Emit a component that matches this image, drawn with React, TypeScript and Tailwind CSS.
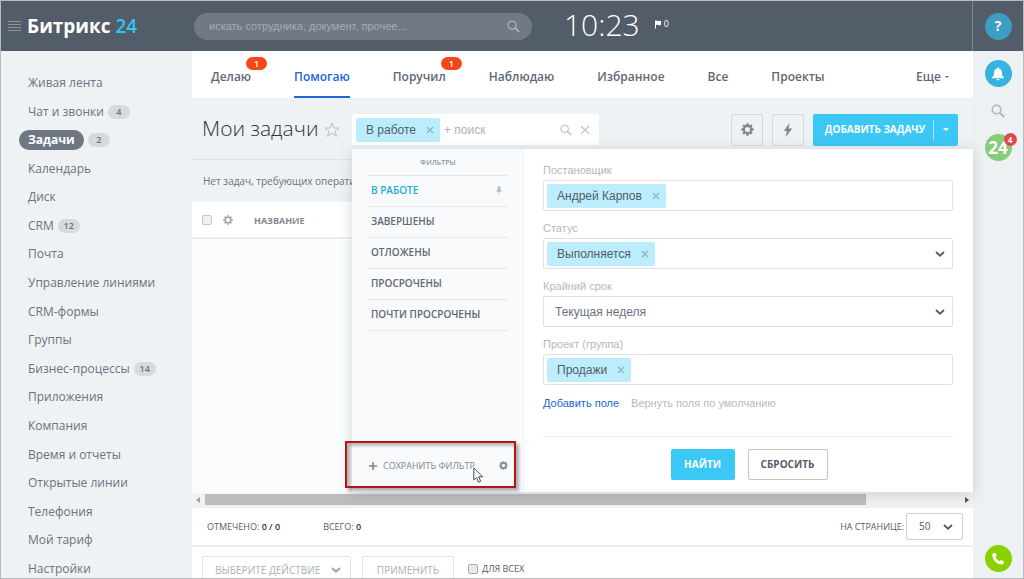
import React from 'react';

type MenuItem = { label: string; count?: number; active?: boolean };

const menu: MenuItem[] = [
  { label: 'Живая лента' },
  { label: 'Чат и звонки', count: 4 },
  { label: 'Задачи', count: 2, active: true },
  { label: 'Календарь' },
  { label: 'Диск' },
  { label: 'CRM', count: 12 },
  { label: 'Почта' },
  { label: 'Управление линиями' },
  { label: 'CRM-формы' },
  { label: 'Группы' },
  { label: 'Бизнес-процессы', count: 14 },
  { label: 'Приложения' },
  { label: 'Компания' },
  { label: 'Время и отчеты' },
  { label: 'Открытые линии' },
  { label: 'Телефония' },
  { label: 'Мой тариф' },
  { label: 'Настройки' },
];

type Tab = { label: string; badge?: number; active?: boolean };

const tabs: Tab[] = [
  { label: 'Делаю', badge: 1 },
  { label: 'Помогаю', active: true },
  { label: 'Поручил', badge: 1 },
  { label: 'Наблюдаю' },
  { label: 'Избранное' },
  { label: 'Все' },
  { label: 'Проекты' },
];

const filters = ['В РАБОТЕ', 'ЗАВЕРШЕНЫ', 'ОТЛОЖЕНЫ', 'ПРОСРОЧЕНЫ', 'ПОЧТИ ПРОСРОЧЕНЫ'];

type IconProps = { className?: string };

function Gear({ className }: IconProps) {
  return (
    <svg viewBox="0 0 16 16" className={className} aria-hidden="true">
      <circle cx="8" cy="8" r="4.4" fill="none" stroke="currentColor" strokeWidth="2.6" />
      <g stroke="currentColor" strokeWidth="3">
        <path d="M8 .4v2.600M8 13v2.600M.4 8H3M13 8h2.600M2.600 2.600l1.900 1.900M11.500 11.500l1.900 1.900M2.600 13.400l1.900-1.900M11.500 4.500l1.900-1.900" />
      </g>
    </svg>
  );
}

function Magnifier({ className }: IconProps) {
  return (
    <svg viewBox="0 0 14 14" className={className} fill="none" stroke="currentColor" aria-hidden="true">
      <circle cx="5.5" cy="5.5" r="4.3" strokeWidth="1.5" />
      <path d="M8.6 8.6l4.600 4.400" strokeWidth="1.900" />
    </svg>
  );
}

function Cross({ className }: IconProps) {
  return (
    <svg viewBox="0 0 10 10" className={className} fill="none" stroke="currentColor" aria-hidden="true">
      <path d="M1 1l8 8M9 1l-8 8" strokeWidth="1.4" />
    </svg>
  );
}

function Chevron({ className }: IconProps) {
  return (
    <svg viewBox="0 0 10 6" className={className} fill="none" stroke="currentColor" aria-hidden="true">
      <path d="M1 1l4 3.6L9 1" strokeWidth="1.9" />
    </svg>
  );
}

function Chip({ children }: { children: string }) {
  return (
    <span className="flex h-6 shrink-0 items-center gap-2.5 rounded-xs bg-[#bcedfc] pr-1.5 pl-2.5 text-xs text-[#535c69]">
      {children}
      <button type="button" aria-label={`Убрать: ${children}`} className="text-[#91b5c0]">
        <svg viewBox="0 0 8 8" className="size-2" fill="none" stroke="currentColor" aria-hidden="true">
          <path d="M1 1l6 6M7 1L1 7" strokeWidth="1.4" />
        </svg>
      </button>
    </span>
  );
}

function Field({ id, label, chip, dropdown }: { id: string; label: string; chip: string; dropdown?: boolean }) {
  return (
    <div>
      <label htmlFor={id} className="block h-5 text-[11px] leading-5 text-[#b4b8bd]">
        {label}
      </label>
      <div className="flex h-[31px] items-center rounded-xs border border-[#dfe1e4] bg-white pr-[7px] pl-[3px]">
        <Chip>{chip}</Chip>
        <input id={id} className="min-w-0 flex-1 bg-transparent px-2 text-xs outline-none" />
        {dropdown && (
          <button type="button" aria-label="Открыть список" className="text-[#535c69]">
            <Chevron className="h-1.5 w-2.5" />
          </button>
        )}
      </div>
    </div>
  );
}

function Header() {
  return (
    <header className="flex h-[50px] shrink-0 bg-[#535c69]">
      <div className="flex min-w-0 flex-1 items-center border-r border-[#7d858f]">
        <div className="flex w-[193px] shrink-0 items-center gap-1.5 pl-[7px]">
          <button type="button" aria-label="Меню" className="flex w-[13px] flex-col gap-0.5">
            <span className="h-px bg-[#8d949d]" />
            <span className="h-px bg-[#8d949d]" />
            <span className="h-px bg-[#8d949d]" />
            <span className="h-px bg-[#8d949d]" />
          </button>
          <a href="#home" className="text-[19px] leading-7 font-bold text-white">
            Битрикс <span className="font-semibold text-[#2fc7f7]">24</span>
          </a>
        </div>
        <form className="flex h-[27px] w-[338px] shrink-0 items-center rounded-full bg-[#717a84] pr-3 pl-[15px]">
          <input
            aria-label="Поиск по порталу"
            placeholder="искать сотрудника, документ, прочее..."
            className="min-w-0 flex-1 bg-transparent font-['Liberation_Sans',sans-serif] text-[11px] text-white outline-none placeholder:text-[#a5abb2]"
          />
          <button type="button" aria-label="Найти" className="text-[#a9afb6]">
            <Magnifier className="size-[13px]" />
          </button>
        </form>
        <time className="ml-8 pb-0.5 text-[30px] leading-10 font-light text-white">10:23</time>
        <span className="mb-1 ml-3.5 flex items-center gap-0.5 text-[9px] leading-3 text-white">
          <svg viewBox="0 0 8 9" className="h-[9px] w-2" fill="currentColor" aria-hidden="true">
            <path d="M1 0.5h1v8H1zM2 0.8c2-.6 2.500.6 5 0v4.200c-2.300.6-3-.6-5 0z" />
          </svg>
          0
        </span>
      </div>
      <div className="flex w-[50px] items-center justify-center">
        <button
          type="button"
          aria-label="Помощь"
          className="flex size-[27px] items-center justify-center rounded-full bg-[#3c9ec2] text-sm font-bold text-white"
        >
          ?
        </button>
      </div>
    </header>
  );
}

function Sidebar() {
  return (
    <nav aria-label="Главное меню" className="-mb-px flex w-[191px] shrink-0 flex-col justify-between gap-1 pt-[22px]">
      {menu.map((item) => (
        <a
          key={item.label}
          href="#menu"
          className="flex h-5 shrink-0 items-center gap-1 pl-[18px] text-xs leading-5 text-[#6a737f]"
        >
          <span
            className={
              item.active
                ? 'rounded-full bg-[#6d7681] px-[9px] font-bold text-white'
                : 'pl-[9px]'
            }
          >
            {item.label}
          </span>
          {item.count !== undefined && (
            <span className="flex h-3.5 w-[22px] items-center justify-center rounded-full bg-[#d5dadf] text-[9px] font-semibold text-[#6a737f]">
              {item.count}
            </span>
          )}
        </a>
      ))}
    </nav>
  );
}

function Tabs() {
  return (
    <nav aria-label="Разделы задач" className="flex h-[47px] shrink-0 items-stretch gap-[43px] bg-white pr-6 pl-[19px] text-xs font-semibold text-[#5f6873]">
      {tabs.map((tab) => (
        <a
          key={tab.label}
          href="#tab"
          className={
            tab.active
              ? 'relative flex items-center border-b-2 border-[#2067d6] pt-1.5 text-[#2067d6]'
              : 'relative flex items-center border-b-2 border-transparent pt-1.5'
          }
        >
          {tab.label}
          {tab.badge !== undefined && (
            <span className="absolute top-1.5 -right-4 flex h-[13px] w-[21px] items-center justify-center rounded-full bg-[#f54819] text-[9px] text-white">
              {tab.badge}
            </span>
          )}
        </a>
      ))}
      <button type="button" className="ml-auto flex items-center gap-1 pt-1">
        Еще
        <span className="border-x-2 border-t-2 border-x-transparent border-t-current" />
      </button>
    </nav>
  );
}

function FilterPanel() {
  return (
    <div className="absolute top-[51px] right-0 left-40 z-10 flex bg-white shadow-[0_2px_12px_rgba(83,92,105,0.25)]">
      <section className="flex w-[172px] shrink-0 flex-col border-r border-[#eef1f3] bg-[#f8fafb] pr-[15px] pl-4">
        <h2 className="h-[26px] pt-px text-center text-[7px] leading-[26px] font-semibold text-[#8d949d]">ФИЛЬТРЫ</h2>
        <ul className="border-t border-[#e4e8eb]">
          {filters.map((name, i) => (
            <li key={name} className="flex h-[31px] items-center justify-between border-b border-[#e4e8eb] pr-1.5 pb-0.5 pl-[3px]">
              <button
                type="button"
                className={i === 0 ? 'text-[10px] font-semibold text-[#1fa9dc]' : 'text-[10px] font-semibold text-[#5f6873]'}
              >
                {name}
              </button>
              {i === 0 && (
                <svg viewBox="0 0 8 11" className="h-[9px] w-1.5 text-[#b4bac0]" fill="currentColor" aria-label="Закреплён">
                  <path d="M1.500 0h5v1.200H6v3.600L7.500 6v1.200h-3V11h-1V7.200h-3V6L2 4.800V1.200h-.5z" />
                </svg>
              )}
            </li>
          ))}
        </ul>
        <div className="relative mt-auto mb-1 flex h-[47px] items-center gap-1.5 pt-0.5 text-[#7f8790]">
          <button type="button" className="flex items-center gap-1.5 pl-px text-[9px]">
            <svg viewBox="0 0 8 8" className="size-2" stroke="currentColor" aria-hidden="true">
              <path d="M4 0v8M0 4h8" strokeWidth="1.600" />
            </svg>
            СОХРАНИТЬ ФИЛЬТР
          </button>
          <button type="button" aria-label="Настроить фильтры" className="ml-auto">
            <Gear className="size-[9px]" />
          </button>
          <div className="pointer-events-none absolute inset-y-0 -right-2 -left-[23px] border-2 border-[#bd1010] shadow-[3px_3px_3px_rgba(0,0,0,0.3),inset_3px_3px_3px_rgba(0,0,0,0.25)]" />
          <svg viewBox="0 0 11 17" className="pointer-events-none absolute top-[26px] right-6 h-[17px] w-[11px]" aria-hidden="true">
            <path d="M.8 1v12l2.800-2.500 1.900 4.700 2.200-.9-2-4.500h4z" fill="#fff" stroke="#444b58" />
          </svg>
        </div>
      </section>
      <form className="min-w-0 flex-1 pr-5 pb-3 pl-[19px] font-['Liberation_Sans',sans-serif]">
        <div className="flex flex-col gap-[7px] pt-[11px]">
          <Field id="director" label="Постановщик" chip="Андрей Карпов" />
          <Field id="status" label="Статус" chip="Выполняется" dropdown />
          <div>
            <label htmlFor="deadline" className="block h-5 text-[11px] leading-5 text-[#b4b8bd]">
              Крайний срок
            </label>
            <div className="relative">
              <select
                id="deadline"
                className="block h-[31px] w-full appearance-none rounded-xs border border-[#dfe1e4] bg-white px-[11px] text-xs text-[#6a737f]"
              >
                <option>Текущая неделя</option>
              </select>
              <Chevron className="pointer-events-none absolute top-[13px] right-2 h-1.5 w-2.5 text-[#535c69]" />
            </div>
          </div>
          <Field id="project" label="Проект (группа)" chip="Продажи" />
        </div>
        <div className="flex h-[52px] gap-3 border-b border-[#f0f2f4] pt-2.5 text-[11px] leading-4">
          <a href="#add-field" className="text-[#2067d6]">Добавить поле</a>
          <a href="#reset-fields" className="text-[#b4b8bd]">Вернуть поля по умолчанию</a>
        </div>
        <div className="flex justify-center gap-[13px] pt-3 pl-0.5 font-['Open_Sans',sans-serif] text-[10px] font-bold">
          <button type="button" className="h-[31px] w-16 rounded-xs bg-[#3bc8f5] text-white">НАЙТИ</button>
          <button type="button" className="h-[31px] w-20 rounded-xs border border-[#c0c3c7] bg-white text-[#535c69]">СБРОСИТЬ</button>
        </div>
      </form>
    </div>
  );
}

function TitleBar() {
  return (
    <div className="relative flex h-[62px] shrink-0 items-center border-b border-[#dfe4e7] pt-0.5 pr-[15px]">
      <div className="flex w-40 shrink-0 items-center gap-1.5 pl-2.5">
        <h1 className="pb-1 text-[21px] leading-8 font-light whitespace-nowrap text-[#333]">Мои задачи</h1>
        <button type="button" aria-label="В избранное" className="text-[#b9c0c6]">
          <svg viewBox="0 0 16 16" className="size-4" fill="none" stroke="currentColor" aria-hidden="true">
            <path d="M8 1l1.900 5h5.200l-4.200 3.200 1.600 5.200L8 11.200l-4.500 3.200 1.600-5.200L.9 6h5.200z" />
          </svg>
        </button>
      </div>
      <div className="flex h-[31px] w-[247px] items-center rounded-xs bg-white pr-[9px] pl-1 font-['Liberation_Sans',sans-serif]">
        <Chip>В работе</Chip>
        <input
          aria-label="Поиск и фильтр"
          placeholder="+ поиск"
          className="min-w-0 flex-1 px-1 text-xs text-[#535c69] outline-none placeholder:text-[#abb1b8]"
        />
        <button type="button" aria-label="Искать" className="text-[#c3c8cd]">
          <Magnifier className="size-3" />
        </button>
        <button type="button" aria-label="Очистить" className="ml-2 text-[#c3c8cd]">
          <Cross className="size-2.5" />
        </button>
      </div>
      <div className="ml-auto flex items-center gap-[9px]">
        <button type="button" aria-label="Настройки" className="flex size-8 items-center justify-center rounded-xs border border-[#d3d8dc] text-[#7f8790]">
          <Gear className="size-[13px]" />
        </button>
        <button type="button" aria-label="Автоматизация" className="flex size-8 items-center justify-center rounded-xs border border-[#d3d8dc] text-[#7f8790]">
          <svg viewBox="0 0 10 14" className="h-3.5 w-2.5" fill="currentColor" aria-hidden="true">
            <path d="M6.500 0L.8 8h3L2.800 14 9.200 5.600H5.700z" />
          </svg>
        </button>
        <div className="flex h-8 items-center rounded-xs bg-[#3bc8f5] text-[10px] font-bold text-white">
          <button type="button" className="h-5 w-[121px] border-r border-[#a5e5fb] pl-1">ДОБАВИТЬ ЗАДАЧУ</button>
          <button type="button" aria-label="Ещё варианты" className="flex h-8 w-6 items-center justify-center">
            <span className="border-x-[3px] border-t-[3px] border-x-transparent border-t-white" />
          </button>
        </div>
      </div>
      <FilterPanel />
    </div>
  );
}

function TaskGrid() {
  return (
    <>
      <p className="h-[42px] shrink-0 pl-[11px] text-[10px] leading-[42px] text-[#6a737f]">
        Нет задач, требующих оперативной реакции
      </p>
      <div className="min-h-40 flex-1 bg-[#fafcfd]">
        <table className="w-full border-b-2 border-[#eaeff2] bg-white">
          <thead>
            <tr className="h-9 text-left">
              <th className="w-[25px] pl-2.5">
                <input type="checkbox" aria-label="Выбрать все" className="block size-2.5 appearance-none rounded-xs border border-[#c5c9cd] bg-[#f1f1f1]" />
              </th>
              <th className="w-[37px] pl-1.5">
                <button type="button" aria-label="Настроить колонки" className="block text-[#a3aab2]">
                  <Gear className="size-2.5" />
                </button>
              </th>
              <th className="pt-0.5 text-[9px] font-bold text-[#7f8790]">НАЗВАНИЕ</th>
            </tr>
          </thead>
        </table>
      </div>
      <div className="flex h-[15px] shrink-0 items-center bg-[#f0f1f2] pb-0.5">
        <span className="ml-1 border-y-[3px] border-r-4 border-y-transparent border-r-[#a0a0a0]" />
        <span className="ml-[5px] h-[11px] w-[661px] bg-[#bdbdbd]" />
        <span className="mr-1 ml-auto border-y-[3px] border-l-4 border-y-transparent border-l-[#505050]" />
      </div>
      <div className="flex h-[39px] shrink-0 items-center border-b-2 border-[#eaeff2] bg-white pr-2.5 pl-[15px] text-[9px] text-[#535c69]">
        <span>ОТМЕЧЕНО: <b className="font-semibold text-[#333]">0 / 0</b></span>
        <span className="ml-[43px]">ВСЕГО: <b className="font-semibold text-[#333]">0</b></span>
        <label htmlFor="page-size" className="ml-auto">НА СТРАНИЦЕ:</label>
        <div className="relative ml-0.5">
          <select id="page-size" className="block h-[27px] w-[57px] appearance-none rounded-xs border border-[#cdd2d6] bg-white pl-3 text-[10px] text-[#535c69]">
            <option>50</option>
          </select>
          <Chevron className="pointer-events-none absolute top-[11px] right-2.5 h-1.5 w-2.5" />
        </div>
      </div>
      <div className="flex h-[31px] shrink-0 items-start overflow-hidden bg-white pt-[9px] pl-2.5 text-[10px]">
        <div className="relative">
          <select aria-label="Действие" className="block h-7 w-[149px] appearance-none rounded-xs border border-[#dfe3e6] bg-white pl-3 text-[#a9b0b7]">
            <option>ВЫБЕРИТЕ ДЕЙСТВИЕ</option>
          </select>
          <Chevron className="pointer-events-none absolute top-[11px] right-2.5 h-1.5 w-2.5 text-[#9aa2aa]" />
        </div>
        <button type="button" className="ml-[11px] h-7 w-[92px] rounded-xs border border-[#dfe3e6] text-[#a9b0b7]">ПРИМЕНИТЬ</button>
        <label className="ml-3.5 flex h-[26px] items-center gap-1 text-[9px] text-[#535c69]">
          <input type="checkbox" className="size-2.5 appearance-none rounded-xs border border-[#a9a9a9] bg-[#e9e9e9]" />
          ДЛЯ ВСЕХ
        </label>
      </div>
    </>
  );
}

function Rail() {
  return (
    <aside className="flex w-[50px] shrink-0 flex-col items-center bg-[#edf1f3] pt-[9px] pb-1.5">
      <button type="button" aria-label="Уведомления" className="flex size-[27px] items-center justify-center rounded-full bg-[#35b4e0] text-white">
        <svg viewBox="0 0 14 14" className="size-3.5" fill="currentColor" aria-hidden="true">
          <path d="M7 .5c.7 0 1.100.4 1.100 1.100C10.200 2.200 11 3.800 11 5.800c0 2.700.6 3.500 2 4.700v.8H1v-.8c1.400-1.200 2-2 2-4.700 0-2 .8-3.600 2.900-4.200C5.900.9 6.300.5 7 .5zM5.500 12h3c-.2.900-.8 1.400-1.500 1.400S5.700 12.900 5.500 12z" />
        </svg>
      </button>
      <button type="button" aria-label="Поиск" className="mt-[17px] text-[#adb4ba]">
        <Magnifier className="size-3.5" />
      </button>
      <button
        type="button"
        aria-label="Битрикс24, 4 новых"
        className="relative mt-4 flex size-[27px] items-center justify-center rounded-full bg-[#86cc79] text-[17px] font-bold text-white"
      >
        24
        <span className="absolute -top-px -right-[5px] flex size-[13px] items-center justify-center rounded-full bg-[#e2484e] text-[8px]">4</span>
      </button>
      <button type="button" aria-label="Позвонить" className="mt-auto flex size-[27px] items-center justify-center rounded-full bg-[#8bd000] text-white">
        <svg viewBox="0 0 14 14" className="size-3.5" fill="currentColor" aria-hidden="true">
          <path d="M2.200 1.300L4 .8c.4-.1.700.1.900.5l.8 2.100c.1.300 0 .7-.3.900l-1 .8c.7 1.900 2.200 3.500 4.200 4.300l.9-1c.2-.3.600-.4.900-.2l2.100 1c.4.200.5.500.4.900l-.6 1.700c-.2.500-.6.800-1.100.8C5.700 12.400 1.300 7.900 1.300 2.500c0-.6.300-1 .9-1.200z" />
        </svg>
      </button>
    </aside>
  );
}

export default function App() {
  return (
    <div className="flex h-screen flex-col overflow-hidden border border-[#b9bcbe] bg-[#eef2f4] font-['Open_Sans',sans-serif]">
      <Header />
      <div className="flex min-h-0 flex-1">
        <Sidebar />
        <main className="relative z-10 flex min-w-0 flex-1 flex-col">
          <Tabs />
          <TitleBar />
          <TaskGrid />
        </main>
        <Rail />
      </div>
    </div>
  );
}
